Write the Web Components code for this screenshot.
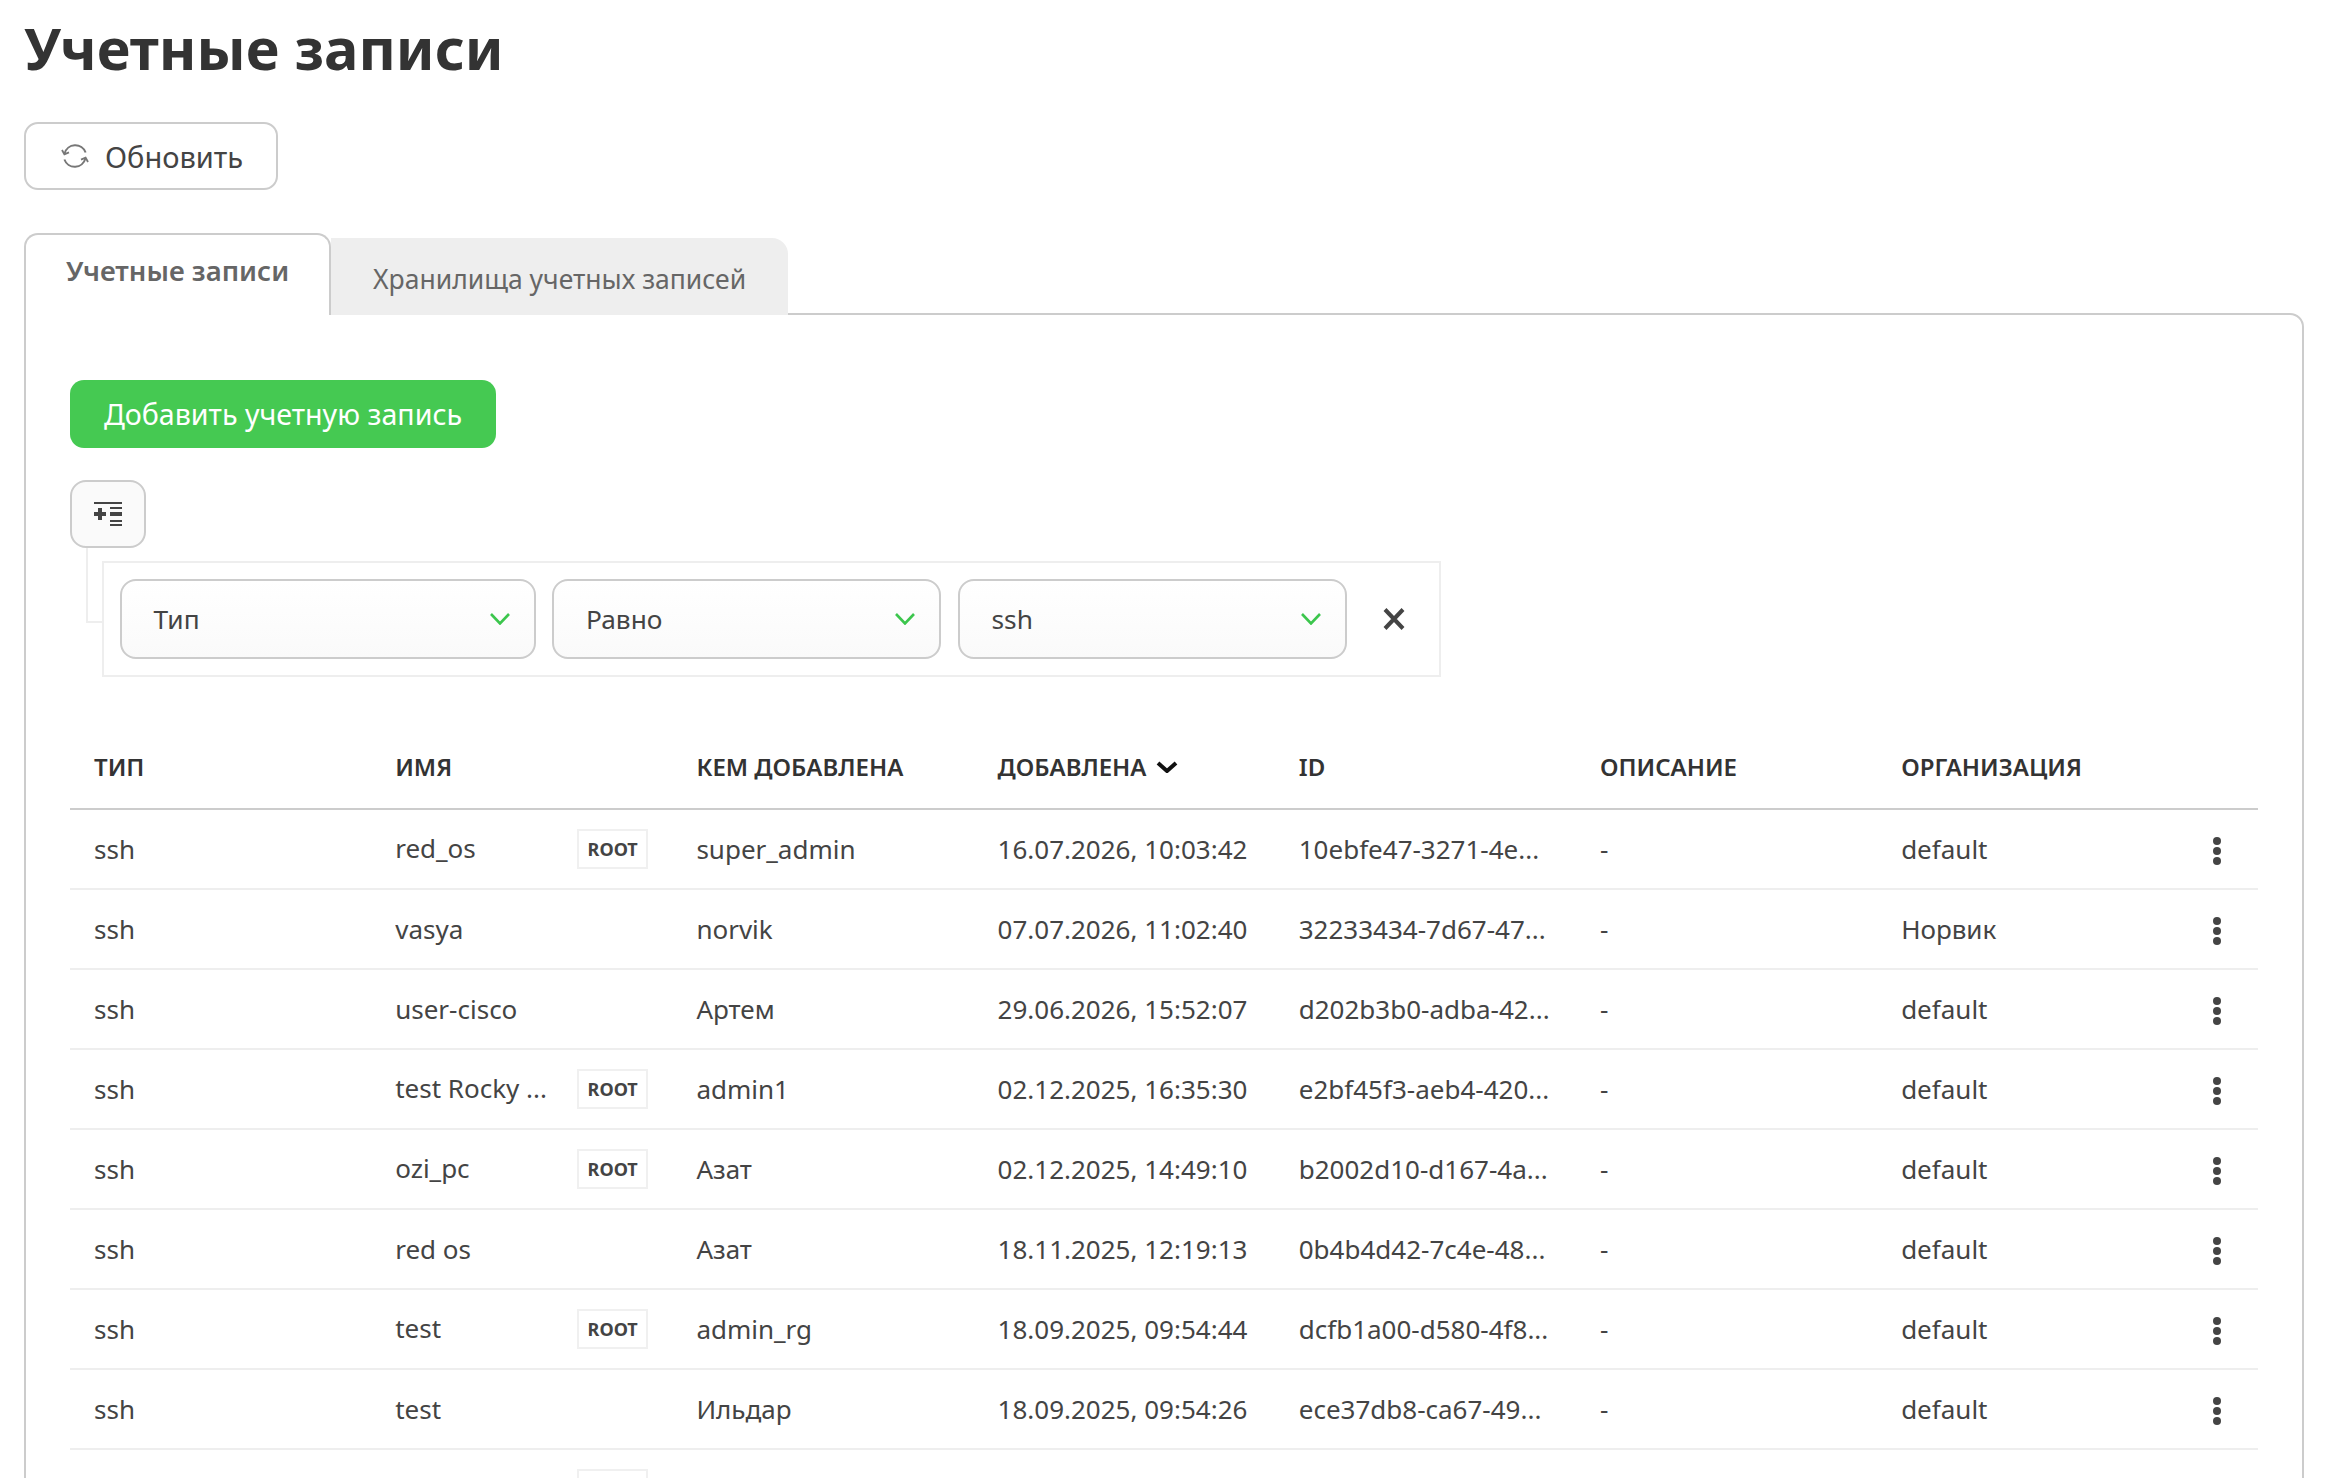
<!doctype html>
<html lang="ru"><head><meta charset="utf-8"><title>Учетные записи</title>
<style>
html,body{margin:0;height:100%;overflow:hidden;background:#fff}
body{font-family:"Noto Sans","Open Sans",sans-serif;color:#444;font-size:26px}
</style></head><body>
<accounts-page></accounts-page>
<script>
const CHEV='<svg width="20" height="12" viewBox="0 0 20 12" fill="none"><path d="M1 1l9 9.5L19 1" stroke="#3cc64d" stroke-width="2.6"/></svg>';
function def(name,css,html,extra){
  customElements.define(name,class extends HTMLElement{
    constructor(){super();const r=this.attachShadow({mode:'open'});
      r.innerHTML='<style>'+css+'</style>'+(typeof html==='function'?html(this):html);}
    connectedCallback(){if(extra)extra(this)}
  });
}
def('page-title',':host{display:block;font-size:57.6px;font-weight:700;color:#333;line-height:96px;height:96px;margin-bottom:26px;white-space:nowrap}','<slot></slot>');
def('refresh-button',`:host{display:inline-flex;align-items:center;box-sizing:border-box;height:68px;width:254px;border:2px solid #ccc;border-radius:14px;padding-left:35px;gap:16px;font-size:29px;color:#444;background:#fff}
svg{flex:none}`,`<svg width="28" height="26" viewBox="0 0 28 26" fill="none" stroke="#777" stroke-width="2"><path d="M3.6 10.5A11 11 0 0 1 24.6 9.5"/><path d="M24.4 15.5A11 11 0 0 1 3.4 16.5"/><path d="M1 7l2.4 4.4L8 9.4" stroke-width="1.8"/><path d="M27 19l-2.4-4.4L20 16.6" stroke-width="1.8"/></svg><slot></slot>`);
def('tab-item',`:host{display:flex;box-sizing:border-box;white-space:nowrap;color:#666;position:relative;margin-bottom:-2px}
:host([active]){height:82px;width:307px;border:2px solid #ccc;border-bottom:0;border-radius:14px 14px 0 0;background:#fff;font-weight:600;padding:19px 0 0 40px;z-index:1;line-height:34px;font-size:27.5px}
:host(:not([active])){height:77px;width:457px;background:#eee;border-radius:0 16px 0 0;padding:23px 0 0 42px;line-height:36px;font-size:26.5px}`,'<slot></slot>');
def('tab-strip',':host{display:flex;align-items:flex-end;margin-top:43px}','<slot></slot>');
def('panel-box',':host{display:block;box-sizing:border-box;border:2px solid #ccc;border-radius:0 14px 14px 14px;padding:65px 44px 0;min-height:1200px}','<slot></slot>');
def('add-button',':host{display:inline-flex;align-items:center;justify-content:center;box-sizing:border-box;width:426px;height:68px;background:#45c952;color:#fff;border-radius:14px;font-size:28.6px;white-space:nowrap;padding-bottom:2px}','<slot></slot>');
def('filter-builder',':host{display:block;margin-top:32px}.btn{display:flex;align-items:center;justify-content:center;box-sizing:border-box;width:76px;height:68px;border:2px solid #ccc;border-radius:16px;background:#fafafa}.wrap{display:flex;margin-left:16px}.line{width:14px;height:73px;border-left:2px solid #eee;border-bottom:2px solid #eee;margin-top:0;flex:none}.box{box-sizing:border-box;margin-top:13px;width:1339px;height:116px;border:2px solid #eee;padding:16px 0 0 15.5px;display:flex;gap:16.5px}.x{display:flex;align-items:center;height:80px;margin-left:20px}',
`<div class="btn"><svg width="28" height="24" viewBox="0 0 28 24" fill="#444"><rect width="28" height="2"/><rect x="16" y="5" width="12" height="2"/><rect x="16" y="10" width="12" height="4"/><rect x="16" y="18" width="12" height="2"/><rect x="16" y="22" width="12" height="2"/><rect y="10" width="12" height="4"/><rect x="4" y="6" width="4" height="12"/></svg></div><div class="wrap"><div class="line"></div><div class="box"><slot></slot><div class="x"><svg width="22" height="22" viewBox="0 0 22 22" fill="none" stroke="#444" stroke-width="4"><path d="M2 1.5l18 19M20 1.5l-18 19"/></svg></div></div></div>`);
def('filter-select',`:host{display:flex;align-items:center;justify-content:space-between;box-sizing:border-box;height:80px;border:2px solid #ccc;border-radius:16px;background:linear-gradient(#fff,#fafafa);padding:0 24px 0 32px;font-size:26.3px;color:#444}svg{flex:none}`,`<slot></slot>`+CHEV);
const COLS='grid-template-columns:repeat(7,301.2px) 1fr;';
def('table-head',`:host{display:grid;${COLS}height:133px;box-sizing:border-box;border-bottom:2px solid #ccc;align-items:center;padding-top:48px;padding-bottom:0;font-size:24px;font-weight:600;color:#333;white-space:nowrap}
div{padding-left:24px;display:flex;align-items:center;gap:10px}`,
`<div>ТИП</div><div>ИМЯ</div><div>КЕМ ДОБАВЛЕНА</div><div>ДОБАВЛЕНА<svg width="22" height="12" viewBox="0 0 22 12" fill="none"><path d="M2 2l9 8 9-8" stroke="#111" stroke-width="4"/></svg></div><div>ID</div><div>ОПИСАНИЕ</div><div>ОРГАНИЗАЦИЯ</div><div></div>`);
def('table-row',`:host{display:grid;${COLS}height:80px;box-sizing:border-box;border-bottom:2px solid #eee;align-items:center;font-size:26px;color:#444;white-space:nowrap}
.c{padding-left:24px;display:flex;align-items:center;min-width:0}
.n{display:flex;align-items:center}
.name{width:182px;overflow:hidden;flex:none}
.root .name{transform:translateY(-1px)}
.b{display:flex;align-items:center;justify-content:center;box-sizing:border-box;width:71px;height:40px;border:2px solid #f0f0f0;font-size:18px;font-weight:700;color:#444;flex:none}
.d{justify-content:center;padding:4px 2px 0 0}`,
el=>{const g=k=>el.getAttribute(k)||'';const root=el.hasAttribute('root');const blank=el.hasAttribute('blank');
 return `<div class="c">${g('type')}</div><div class="c n ${root?'root':''}"><span class="name">${g('name')}</span>${root?`<span class="b">${blank?'':'ROOT'}</span>`:''}</div><div class="c">${g('by')}</div><div class="c">${g('date')}</div><div class="c">${g('uid')}</div><div class="c">${g('desc')}</div><div class="c">${g('org')}</div><div class="c d">${blank?'':'<svg width="10" height="30" viewBox="0 0 10 30" fill="#444"><circle cx="5" cy="5" r="4"/><circle cx="5" cy="15" r="4"/><circle cx="5" cy="25" r="4"/></svg>'}</div>`});
def('accounts-page',':host{display:block;box-sizing:border-box;height:1478px;overflow:hidden;padding:0 22px 0 24px}',`
<page-title>Учетные записи</page-title>
<refresh-button>Обновить</refresh-button>
<tab-strip><tab-item active>Учетные записи</tab-item><tab-item>Хранилища учетных записей</tab-item></tab-strip>
<panel-box>
<add-button>Добавить учетную запись</add-button>
<filter-builder>
<filter-select style="width:416px">Тип</filter-select><filter-select style="width:389px">Равно</filter-select><filter-select style="width:389px">ssh</filter-select>
</filter-builder>
<table-head></table-head>
<table-row type="ssh" name="red_os" root by="super_admin" date="16.07.2026, 10:03:42" uid="10ebfe47-3271-4e..." desc="-" org="default"></table-row>
<table-row type="ssh" name="vasya" by="norvik" date="07.07.2026, 11:02:40" uid="32233434-7d67-47..." desc="-" org="Норвик"></table-row>
<table-row type="ssh" name="user-cisco" by="Артем" date="29.06.2026, 15:52:07" uid="d202b3b0-adba-42..." desc="-" org="default"></table-row>
<table-row type="ssh" name="test Rocky ..." root by="admin1" date="02.12.2025, 16:35:30" uid="e2bf45f3-aeb4-420..." desc="-" org="default"></table-row>
<table-row type="ssh" name="ozi_pc" root by="Азат" date="02.12.2025, 14:49:10" uid="b2002d10-d167-4a..." desc="-" org="default"></table-row>
<table-row type="ssh" name="red os" by="Азат" date="18.11.2025, 12:19:13" uid="0b4b4d42-7c4e-48..." desc="-" org="default"></table-row>
<table-row type="ssh" name="test" root by="admin_rg" date="18.09.2025, 09:54:44" uid="dcfb1a00-d580-4f8..." desc="-" org="default"></table-row>
<table-row type="ssh" name="test" by="Ильдар" date="18.09.2025, 09:54:26" uid="ece37db8-ca67-49..." desc="-" org="default"></table-row>
<table-row root blank></table-row>
</panel-box>`);
</script></body></html>
